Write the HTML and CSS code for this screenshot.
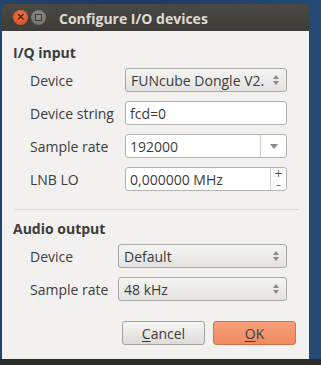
FILE: index.html
```html
<!DOCTYPE html>
<html lang="en">
<head>
    <meta charset="UTF-8">
    <title>Configure I/O devices</title>
    <link rel="stylesheet" href="styles.css">
</head>
<body>
    <div class="window">
        <div class="titlebar">
            <span class="btn-close">&#215;</span>
            <span class="btn-max"></span>
            <span class="title">Configure I/O devices</span>
        </div>
        <div class="content">
            <h2>I/Q input</h2>
            <div class="form form-iq">
                <label>Device</label>
                <div class="combo">
                    <span>FUNcube Dongle V2.</span>
                    <span class="updown"></span>
                </div>

                <label>Device string</label>
                <div class="field">fcd=0</div>

                <label>Sample rate</label>
                <div class="field edit-combo">
                    <span>192000</span>
                    <span class="drop"><span class="tri"></span></span>
                </div>

                <label>LNB LO</label>
                <div class="field spin">
                    <span>0,000000 MHz</span>
                    <span class="spin-btns"><span>+</span><span>&#8211;</span></span>
                </div>
            </div>

            <hr class="sep">

            <h2>Audio output</h2>
            <div class="form form-audio">
                <label>Device</label>
                <div class="combo">
                    <span>Default</span>
                    <span class="updown"></span>
                </div>

                <label>Sample rate</label>
                <div class="combo">
                    <span>48 kHz</span>
                    <span class="updown"></span>
                </div>
            </div>

            <div class="buttons">
                <button class="btn"><u>C</u>ancel</button>
                <button class="btn btn-ok"><u>O</u>K</button>
            </div>
        </div>
    </div>
    <div class="panel"></div>
</body>
</html>
```

FILE: styles.css
```css
body {
    margin: 0;
    height: 365px;
    overflow: hidden;
    background: linear-gradient(90deg, #23446b 0%, #1d3a60 40%, #254a75 100%);
    font-family: "Open Sans", "DejaVu Sans", sans-serif;
    font-size: 14px;
    color: #3c3c3c;
}

.window {
    margin: 4px 0 0 2px;
    width: 307px;
    height: 355px;
    border-radius: 5px 5px 0 0;
    overflow: hidden;
    display: flex;
    flex-direction: column;
}

.titlebar {
    height: 27px;
    flex: none;
    background: linear-gradient(#4a4943, #3c3b37);
    display: flex;
    align-items: center;
    padding-left: 11px;
}

.btn-close, .btn-max {
    width: 15px;
    height: 15px;
    border-radius: 50%;
    box-sizing: border-box;
}

.btn-close {
    background: radial-gradient(circle at 50% 35%, #f2774b, #d34a1f);
    color: #4a1a08;
    font-size: 11px;
    line-height: 14px;
    text-align: center;
    font-family: "DejaVu Sans", sans-serif;
    font-weight: bold;
}

.btn-max {
    margin-left: 3px;
    background: radial-gradient(circle at 50% 35%, #8f8d88, #6a6964);
    position: relative;
}

.btn-max::after {
    content: "";
    position: absolute;
    left: 4px;
    top: 4px;
    width: 5px;
    height: 5px;
    border: 1px solid #3c3b37;
}

.title {
    margin-left: 13px;
    color: #dfdbd2;
    font-weight: bold;
    font-size: 14px;
    padding-top: 1px;
}

.content {
    flex: 1;
    background: #f2f1f0;
    padding: 12px 11px 0 11px;
}

h2 {
    margin: 0;
    font-size: 14px;
    font-weight: bold;
    color: #3c3c3c;
    line-height: 20px;
}

.form {
    display: grid;
    column-gap: 6px;
    row-gap: 9px;
    align-items: center;
    margin-left: 17px;
}

.form-iq {
    grid-template-columns: 89px 162px;
    margin-top: 5px;
}

.form-audio {
    grid-template-columns: 82px 169px;
    margin-top: 5px;
}

.combo, .field {
    height: 24px;
    box-sizing: border-box;
    border-radius: 3px;
    display: flex;
    align-items: center;
    padding-left: 5px;
    color: #3c3c3c;
}

.combo {
    border: 1px solid #a9a7a3;
    background: linear-gradient(#f5f5f4, #e3e2e0);
    justify-content: space-between;
}

.field {
    border: 1px solid #b5b3af;
    background: #ffffff;
    padding-left: 4px;
}

.updown {
    width: 12px;
    height: 14px;
    margin-right: 4px;
    position: relative;
}

.updown::before, .updown::after {
    content: "";
    position: absolute;
    left: 3px;
    border-left: 3px solid transparent;
    border-right: 3px solid transparent;
}

.updown::before {
    top: 2px;
    border-bottom: 4px solid #8a8884;
}

.updown::after {
    bottom: 2px;
    border-top: 4px solid #8a8884;
}

.edit-combo, .spin {
    justify-content: space-between;
    padding-right: 0;
}

.drop {
    width: 25px;
    height: 22px;
    border-left: 1px solid #d3d1cd;
    display: flex;
    align-items: center;
    justify-content: center;
}

.tri {
    border-left: 4px solid transparent;
    border-right: 4px solid transparent;
    border-top: 5px solid #8a8884;
}

.spin-btns {
    width: 15px;
    height: 22px;
    border-left: 1px solid #d3d1cd;
    display: flex;
    flex-direction: column;
    align-items: center;
    justify-content: space-between;
    font-size: 10px;
    line-height: 11px;
    font-family: "DejaVu Sans", sans-serif;
    color: #4a4a4a;
}

.sep {
    border: none;
    border-top: 1px solid #d8d6d2;
    margin: 18px 0 9px 2px;
    width: 284px;
}

.buttons {
    display: flex;
    justify-content: flex-end;
    gap: 8px;
    margin: 20px 2px 0 0;
}

.btn {
    width: 83px;
    height: 24px;
    border-radius: 3px;
    border: 1px solid #a3a19d;
    background: linear-gradient(#f6f6f5, #dcdbd9);
    font-family: inherit;
    font-size: 14px;
    color: #3c3c3c;
    padding: 0;
}

.btn-ok {
    border-color: #d3714c;
    background: linear-gradient(#f7a079, #ef8a60);
}

.btn u {
    text-underline-offset: 2px;
}

.panel {
    height: 6px;
    background: #2b2b2a;
}
```
